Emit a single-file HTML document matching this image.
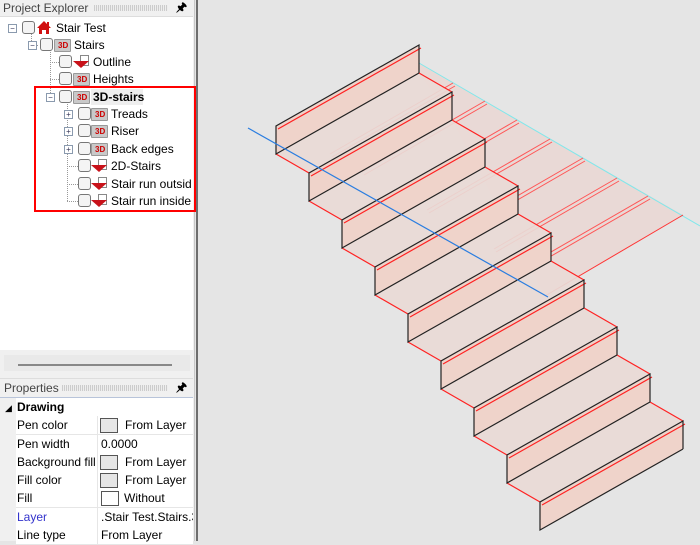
<!DOCTYPE html>
<html><head><meta charset="utf-8"><style>
body{margin:0;width:700px;height:541px;overflow:hidden;background:#e5e5e5;font-family:"Liberation Sans",sans-serif;font-size:12px;position:relative}
.a{position:absolute}
.t{position:absolute;white-space:nowrap;color:#000;font-size:12px;line-height:14px}
.cb{position:absolute;width:11px;height:11px;border:1px solid #777;border-radius:3px;background:#f4f4f4}
.ex{position:absolute;width:7px;height:7px;border:1px solid #8a9aae;background:#fff;font-size:8px;line-height:7px;text-align:center;color:#335}
.f3{position:absolute;width:15px;height:11px;background:#c9c9c9;border:1px solid #999;border-radius:1px}
.f3:after{content:"3D";position:absolute;left:3px;top:1px;font-size:8px;font-weight:bold;color:#c00;line-height:9px}
.lay{position:absolute;width:16px;height:13px}
.lay:before{content:"";position:absolute;left:7px;top:0;width:7px;height:9px;border:1px solid #888;background:#fff}
.lay:after{content:"";position:absolute;left:0;top:6px;border-left:8px solid transparent;border-right:8px solid transparent;border-top:7px solid #c8121a}
.dl{position:absolute;border-left:1px dotted #999}
.dh{position:absolute;border-top:1px dotted #999}
.row{position:absolute;left:0;width:193px;height:18px;border-bottom:1px solid #e6e6e6;background:#fff}
.row .n{position:absolute;left:17px;top:2px}
.row .v{position:absolute;left:98px;top:0;height:18px;border-left:1px solid #e6e6e6;width:95px}
.sw{position:absolute;top:2px;width:16px;height:13px;border:1px solid #555;background:#e6e6e6}
</style></head><body>
<div class="a" style="left:0;top:0;width:194px;height:541px;background:#f0f0f0"></div>
<div class="a" style="left:194px;top:0;width:1px;height:541px;background:#c8c8c8"></div>
<div class="a" style="left:196px;top:0;width:2px;height:541px;background:#6e6e6e"></div>
<div class="t" style="left:3px;top:1px;color:#444">Project Explorer</div>
<div class="a" style="left:94px;top:5px;width:74px;height:6px;background:repeating-linear-gradient(90deg,#ccc 0 1px,#eee 1px 2px)"></div>
<div class="t" style="left:176px;top:0;font-weight:bold">&#x1F588;</div>
<div class="a" style="left:0;top:16px;width:193px;height:333px;background:#fff;border-top:1px solid #ddd"></div>
<div class="a" style="left:4px;top:355px;width:186px;height:16px;background:#e9e9e9"></div>
<div class="a" style="left:18px;top:364px;width:154px;height:2px;background:#888"></div>
<div class="a" style="left:0;top:378px;width:193px;height:1px;background:#ddd"></div>
<div class="t" style="left:4px;top:381px;color:#444">Properties</div>
<div class="a" style="left:62px;top:385px;width:106px;height:6px;background:repeating-linear-gradient(90deg,#ccc 0 1px,#eee 1px 2px)"></div>
<div class="t" style="left:176px;top:380px;font-weight:bold">&#x1F588;</div>
<div class="a" style="left:0;top:397px;width:193px;height:1px;background:#b8c4da"></div>

<div class="dl" style="left:31px;top:32px;height:13px"></div>
<div class="dh" style="left:31px;top:45px;width:7px"></div>
<div class="dl" style="left:50px;top:50px;height:47px"></div>
<div class="dh" style="left:50px;top:62px;width:9px"></div>
<div class="dh" style="left:50px;top:79px;width:9px"></div>
<div class="dl" style="left:67px;top:102px;height:99px"></div>
<div class="dh" style="left:67px;top:166px;width:11px"></div>
<div class="dh" style="left:67px;top:184px;width:11px"></div>
<div class="dh" style="left:67px;top:201px;width:11px"></div>

<div class="ex" style="left:8px;top:24px">−</div>
<div class="cb" style="left:22px;top:21px"></div>
<svg class="a" style="left:36px;top:20px" width="16" height="15"><path d="M1 8 L8 1 L15 8 L13 8 L13 14 L10 14 L10 10 L6 10 L6 14 L3 14 L3 8 Z" fill="#d01010"/><rect x="11" y="2" width="2" height="4" fill="#d01010"/></svg>
<div class="t" style="left:56px;top:21px">Stair Test</div>
<div class="ex" style="left:28px;top:41px">−</div>
<div class="cb" style="left:40px;top:38px"></div>
<div class="f3" style="left:54px;top:39px"></div>
<div class="t" style="left:74px;top:38px">Stairs</div>
<div class="cb" style="left:59px;top:55px"></div>
<div class="lay" style="left:73px;top:55px"></div>
<div class="t" style="left:93px;top:55px">Outline</div>
<div class="cb" style="left:59px;top:72px"></div>
<div class="f3" style="left:73px;top:73px"></div>
<div class="t" style="left:93px;top:72px">Heights</div>
<div class="ex" style="left:46px;top:93px">−</div>
<div class="cb" style="left:59px;top:90px"></div>
<div class="f3" style="left:73px;top:91px"></div>
<div class="a" style="left:91px;top:89px;width:52px;height:16px;background:#eee"></div>
<div class="t" style="left:93px;top:90px;font-weight:bold">3D-stairs</div>
<div class="ex" style="left:64px;top:110px">+</div>
<div class="cb" style="left:78px;top:107px"></div>
<div class="f3" style="left:91px;top:108px"></div>
<div class="t" style="left:111px;top:107px">Treads</div>
<div class="ex" style="left:64px;top:127px">+</div>
<div class="cb" style="left:78px;top:124px"></div>
<div class="f3" style="left:91px;top:125px"></div>
<div class="t" style="left:111px;top:124px">Riser</div>
<div class="ex" style="left:64px;top:145px">+</div>
<div class="cb" style="left:78px;top:142px"></div>
<div class="f3" style="left:91px;top:143px"></div>
<div class="t" style="left:111px;top:142px">Back edges</div>
<div class="cb" style="left:78px;top:159px"></div>
<div class="lay" style="left:91px;top:159px"></div>
<div class="t" style="left:111px;top:159px">2D-Stairs</div>
<div class="cb" style="left:78px;top:177px"></div>
<div class="lay" style="left:91px;top:177px"></div>
<div class="t" style="left:111px;top:177px;width:81px;overflow:hidden">Stair run outside</div>
<div class="cb" style="left:78px;top:194px"></div>
<div class="lay" style="left:91px;top:194px"></div>
<div class="t" style="left:111px;top:194px">Stair run inside</div>
<div class="a" style="left:34px;top:86px;width:158px;height:122px;border:2px solid #f00"></div>

<div class="a" style="left:0;top:398px;width:193px;height:143px;background:#fff"></div>
<div class="a" style="left:0;top:398px;width:16px;height:143px;background:#f0f0f0"></div>
<div class="t" style="left:5px;top:401px;font-size:9px">&#x25E2;</div>
<div class="t" style="left:17px;top:400px;font-weight:bold">Drawing</div>
<div class="row" style="left:16px;width:177px;top:416px"><span class="n" style="left:1px">Pen color</span><div class="v" style="left:81px"><div class="sw" style="left:2px"></div><span class="a" style="left:27px;top:2px">From Layer</span></div></div>
<div class="row" style="left:16px;width:177px;top:435px"><span class="n" style="left:1px">Pen width</span><div class="v" style="left:81px"><span class="a" style="left:3px;top:2px">0.0000</span></div></div>
<div class="row" style="left:16px;width:177px;top:453px"><span class="n" style="left:1px">Background fill</span><div class="v" style="left:81px"><div class="sw" style="left:2px"></div><span class="a" style="left:27px;top:2px">From Layer</span></div></div>
<div class="row" style="left:16px;width:177px;top:471px"><span class="n" style="left:1px">Fill color</span><div class="v" style="left:81px"><div class="sw" style="left:2px"></div><span class="a" style="left:27px;top:2px">From Layer</span></div></div>
<div class="row" style="left:16px;width:177px;top:489px"><span class="n" style="left:1px">Fill</span><div class="v" style="left:81px"><div class="sw" style="left:3px;background:#fff"></div><span class="a" style="left:26px;top:2px">Without</span></div></div>
<div class="row" style="left:16px;width:177px;top:508px"><span class="n" style="left:1px;color:#3333cc">Layer</span><div class="v" style="left:81px;overflow:hidden"><span class="a" style="left:3px;top:2px;white-space:nowrap">.Stair Test.Stairs.3D</span></div></div>
<div class="row" style="left:16px;width:177px;top:526px"><span class="n" style="left:1px">Line type</span><div class="v" style="left:81px"><span class="a" style="left:3px;top:2px">From Layer</span></div></div>

<svg class="a" style="left:0;top:0" width="700" height="541">
<g>
<polygon points="419,63 683,215 545,296 452,120 419,73" fill="#e9d9d6"/>
<line x1="419" y1="63" x2="700" y2="226" stroke="#7fe8ec" stroke-width="1"/>
<line x1="683" y1="215" x2="545" y2="296" stroke="#f33" stroke-width="1"/>
<g stroke="#f55" stroke-width="1">
<line x1="453" y1="83" x2="330" y2="154"/><line x1="455" y1="86" x2="332" y2="157"/>
<line x1="485" y1="101" x2="362" y2="172"/><line x1="487" y1="104" x2="364" y2="175"/>
<line x1="517" y1="120" x2="394" y2="191"/><line x1="519" y1="123" x2="396" y2="194"/>
<line x1="550" y1="139" x2="427" y2="210"/><line x1="552" y1="142" x2="429" y2="213"/>
<line x1="583" y1="158" x2="460" y2="229"/><line x1="585" y1="161" x2="462" y2="232"/>
<line x1="617" y1="178" x2="494" y2="249"/><line x1="619" y1="181" x2="496" y2="252"/>
<line x1="648" y1="196" x2="525" y2="267"/><line x1="650" y1="199" x2="527" y2="270"/>
</g>
</g>
<g id="stairs" stroke-width="1.2"></g>
<line x1="248" y1="128" x2="548" y2="297" stroke="#2a7de0" stroke-width="1.2"/>
</svg>
<script>
var g=document.getElementById('stairs'),s='';
for(var i=0;i<9;i++){var L=276+33*i,T=126+47*i;
 if(i<8){s+='<polygon points="'+L+','+(T+28)+' '+(L+143)+','+(T-53)+' '+(L+176)+','+(T-34)+' '+(L+33)+','+(T+47)+'" fill="#e9dad6" fill-opacity="0.92" stroke="none"/>';
 s+='<line x1="'+L+'" y1="'+(T+28)+'" x2="'+(L+33)+'" y2="'+(T+47)+'" stroke="#f22"/>';
 s+='<line x1="'+(L+143)+'" y1="'+(T-53)+'" x2="'+(L+176)+'" y2="'+(T-34)+'" stroke="#f22"/>';}
 s+='<polygon points="'+L+','+T+' '+(L+143)+','+(T-81)+' '+(L+143)+','+(T-53)+' '+L+','+(T+28)+'" fill="#efd3ca" stroke="none"/>';
 s+='<line x1="'+(L+2)+'" y1="'+(T+3)+'" x2="'+(L+145)+'" y2="'+(T-78)+'" stroke="#f22"/>';
 s+='<polyline points="'+(L+143)+','+(T-53)+' '+(L+143)+','+(T-81)+' '+L+','+T+' '+L+','+(T+28)+' '+(L+143)+','+(T-53)+'" fill="none" stroke="#222"/>';
}
g.innerHTML=s;
</script>
</body></html>
